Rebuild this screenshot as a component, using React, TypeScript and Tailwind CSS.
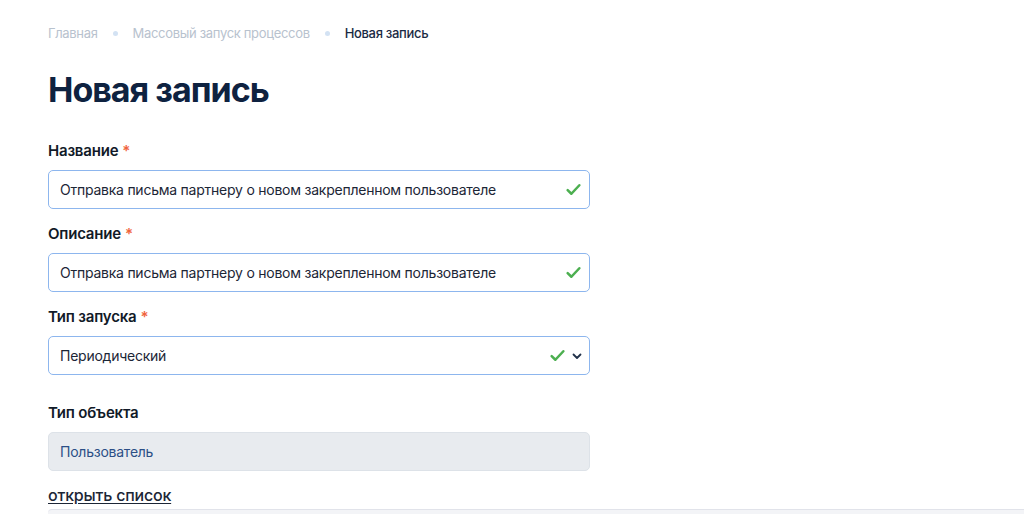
import React from 'react';

const Check = () => (
  <svg width="17" height="17" viewBox="0 0 16 16" fill="none">
    <path d="M2.5 8.5l3.5 3.5 7.5-8" stroke="#4caf50" strokeWidth="2.4" strokeLinecap="round" strokeLinejoin="round" />
  </svg>
);

const Chevron = () => (
  <svg width="12" height="12" viewBox="0 0 12 12" fill="none">
    <path d="M2.5 4.5L6 8l3.5-3.5" stroke="#22324a" strokeWidth="1.8" strokeLinecap="round" strokeLinejoin="round" />
  </svg>
);

const Label: React.FC<{ text: string; required?: boolean }> = ({ text, required }) => (
  <div className="text-[15px] leading-5 font-semibold text-[#111a28] mb-[9px] tracking-[-0.2px]">
    {text}
    {required && <span className="text-[#f0643c] ml-1">*</span>}
  </div>
);

export default function App() {
  return (
    <div className="w-[1024px] h-[514px] overflow-hidden bg-white font-['Inter',sans-serif] text-[#1c2636]">
      <div className="pl-12 pt-[24px]">
        {/* breadcrumbs */}
        <div className="flex items-center text-[13px] leading-[18px] tracking-[-0.32px]">
          <span className="text-[#b8c2ce]">Главная</span>
          <span className="w-[5px] h-[5px] rounded-full bg-[#d3e2f3] mx-[15px]" />
          <span className="text-[#b8c2ce]">Массовый запуск процессов</span>
          <span className="w-[5px] h-[5px] rounded-full bg-[#d3e2f3] mx-[15px]" />
          <span className="text-[#1a2a44] font-medium">Новая запись</span>
        </div>

        <h1 className="mt-[26px] text-[34px] leading-[44px] font-bold text-[#0e2240] tracking-[-1px]">Новая запись</h1>

        <div className="mt-[29px] w-[542px]">
          <Label text="Название" required />
          <div className="h-[39px] border border-[#8db6ee] rounded-[5px] flex items-center pl-[11px] pr-[7px] justify-between">
            <span className="text-[14px] text-[#1c2636] tracking-[-0.24px]">Отправка письма партнеру о новом закрепленном пользователе</span>
            <Check />
          </div>

          <div className="mt-[15px]">
            <Label text="Описание" required />
            <div className="h-[39px] border border-[#8db6ee] rounded-[5px] flex items-center pl-[11px] pr-[7px] justify-between">
              <span className="text-[14px] text-[#1c2636] tracking-[-0.24px]">Отправка письма партнеру о новом закрепленном пользователе</span>
              <Check />
            </div>
          </div>

          <div className="mt-[15px]">
            <Label text="Тип запуска" required />
            <div className="h-[39px] border border-[#8db6ee] rounded-[5px] flex items-center pl-[11px] pr-[6px] justify-between">
              <span className="text-[14px] text-[#1c2636] tracking-[-0.24px]">Периодический</span>
              <div className="flex items-center gap-[5px]">
                <Check />
                <Chevron />
              </div>
            </div>
          </div>

          <div className="mt-[28px]">
            <Label text="Тип объекта" />
            <div className="h-[39px] border border-[#dde2e8] bg-[#e8ebef] rounded-[5px] flex items-center pl-[11px]">
              <span className="text-[14px] text-[#2c4f86] tracking-[-0.24px]">Пользователь</span>
            </div>
          </div>

          <div className="mt-[14px] text-[16px] leading-5 font-medium text-[#1c2636] underline underline-offset-2 tracking-[-0.2px]">открыть список</div>
        </div>
        <div className="mt-[4px] h-[20px] border-t border-[#e1e3ea] bg-[#f3f4f7] rounded-tl-[4px]" />
      </div>
    </div>
  );
}
